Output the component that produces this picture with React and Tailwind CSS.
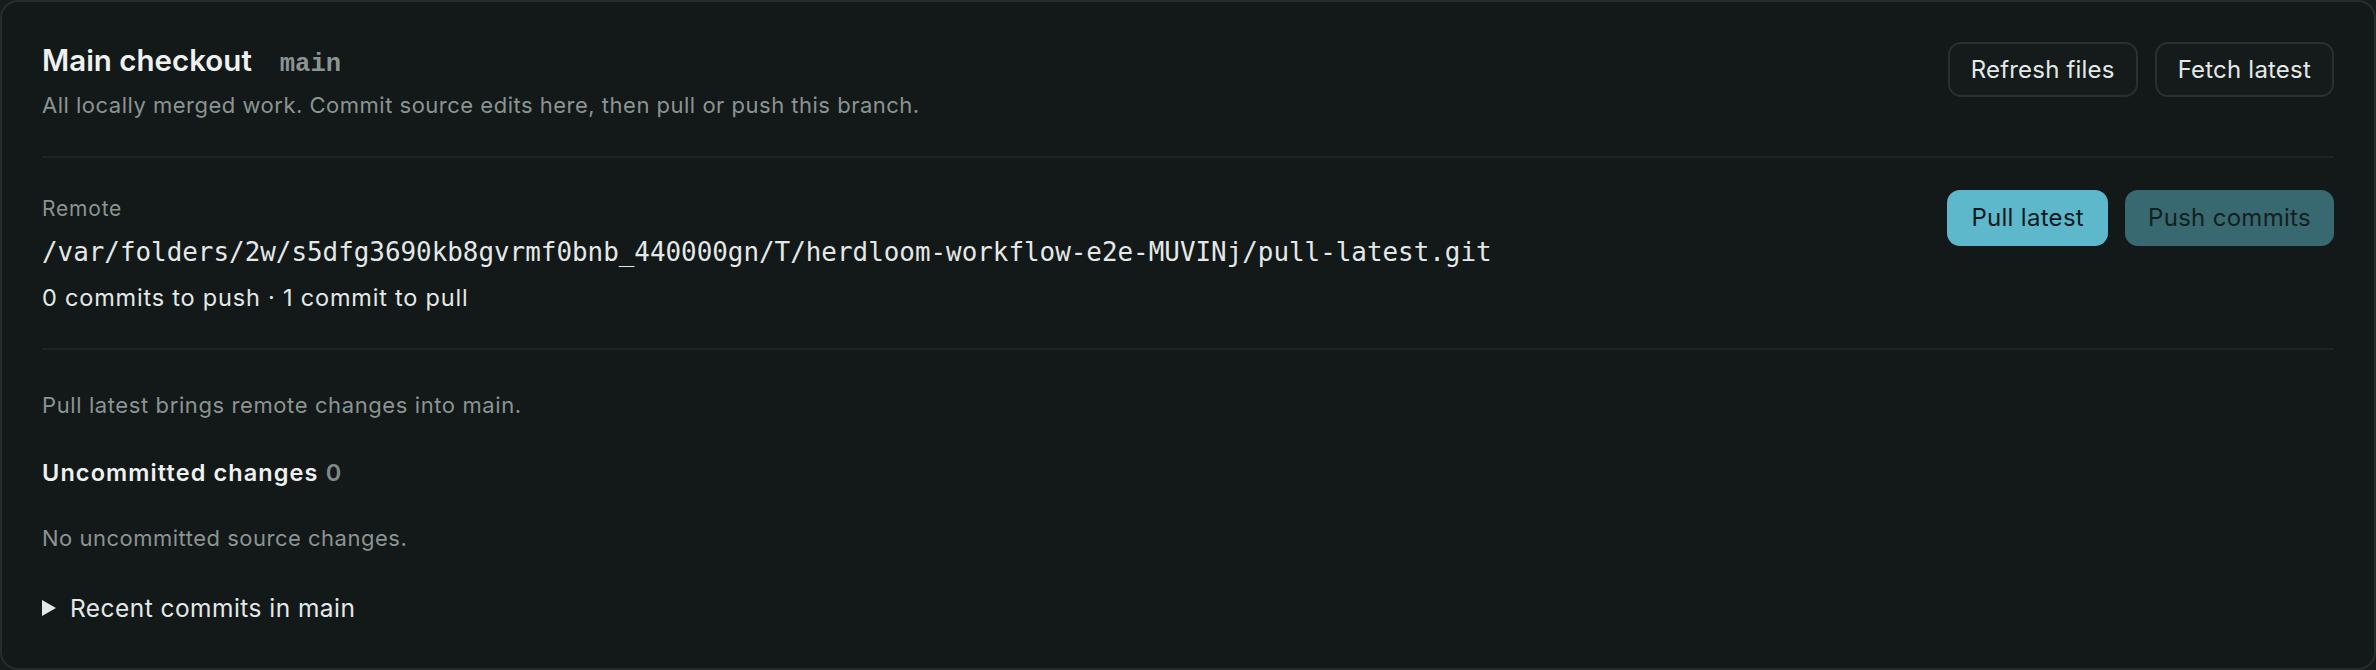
import React from 'react';

const sans = { fontFamily: 'Inter, "Noto Sans", sans-serif' };
const mono = { fontFamily: '"DejaVu Sans Mono", "Liberation Mono", monospace' };

function GhostButton({ children }) {
  return (
    <button type="button"
      className="h-[55px] px-[21px] rounded-[13px] border-2 border-[#293130] bg-[#151b1b] text-[24px] tracking-[0.2px] text-[#e4e9e8] leading-none">
      {children}
    </button>
  );
}

function FillButton({ children, muted }) {
  return (
    <button type="button"
      className={`h-[56px] rounded-[13px] text-[24px] tracking-[0.3px] leading-none ${muted ? 'px-[23px] bg-[#386970] text-[#132022]' : 'px-[24px] bg-[#5eb8cb] text-[#0e1a1c]'}`}>
      {children}
    </button>
  );
}

export default function App() {
  return (
    <div style={sans} className="w-[2376px] h-[670px] bg-[#161c1c]">
      <div className="h-full rounded-[18px] border-2 border-[#252c2c] bg-[#131818] px-[40px] flex flex-col">
        {/* Header */}
        <div className="flex items-start justify-between pt-[38px] pb-[36px]">
          <div>
            <div className="flex items-baseline gap-[28px] h-[40px]">
              <h1 className="text-[29.5px] leading-[40px] font-semibold text-[#eef1f0]">Main checkout</h1>
              <span style={{ fontFamily: '"Liberation Mono", monospace' }} className="text-[25.5px] leading-[40px] font-bold text-[#8b9492]">main</span>
            </div>
            <p className="mt-[10px] text-[22px] tracking-[0.5px] leading-[30px] text-[#8b9492]">
              All locally merged work. Commit source edits here, then pull or push this branch.
            </p>
          </div>
          <div className="flex gap-[17px] mt-[2px]">
            <GhostButton>Refresh files</GhostButton>
            <GhostButton>Fetch latest</GhostButton>
          </div>
        </div>

        <div className="h-[2px] bg-[#1d2424]" />

        {/* Remote */}
        <div className="flex items-start justify-between pt-[32px] pb-[34px]">
          <div className="pt-[5px]">
            <div className="text-[21px] tracking-[0.8px] leading-[28px] text-[#8b9492]">Remote</div>
            <div style={mono} className="mt-[12px] text-[25.9px] leading-[34px] text-[#e4e9e8]">
              /var/folders/2w/s5dfg3690kb8gvrmf0bnb_440000gn/T/herdloom-workflow-e2e-MUVINj/pull-latest.git
            </div>
            <div className="mt-[13px] text-[23.5px] tracking-[0.8px] leading-[32px] text-[#e4e9e8]">
              0 commits to push · 1 commit to pull
            </div>
          </div>
          <div className="flex gap-[17px]">
            <FillButton>Pull latest</FillButton>
            <FillButton muted>Push commits</FillButton>
          </div>
        </div>

        <div className="h-[2px] bg-[#1d2424]" />

        {/* Changes */}
        <div className="pt-[40px]">
          <p className="text-[22px] tracking-[0.6px] leading-[30px] text-[#8b9492]">Pull latest brings remote changes into main.</p>
          <div className="mt-[37px] text-[23.5px] tracking-[1.1px] leading-[32px] font-semibold text-[#eef1f0]">
            Uncommitted changes <span className="text-[#7f8987]">0</span>
          </div>
          <p className="mt-[34px] text-[22px] tracking-[0.5px] leading-[30px] text-[#8b9492]">No uncommitted source changes.</p>
          <div className="mt-[38px] flex items-center gap-[14px] text-[24.5px] tracking-[0.45px] leading-[34px] text-[#e4e9e8]">
            <svg width="14" height="16" viewBox="0 0 14 16" className="shrink-0">
              <path d="M0 0 L14 8 L0 16 Z" fill="#e4e9e8" />
            </svg>
            <span>Recent commits in main</span>
          </div>
        </div>
      </div>
    </div>
  );
}
